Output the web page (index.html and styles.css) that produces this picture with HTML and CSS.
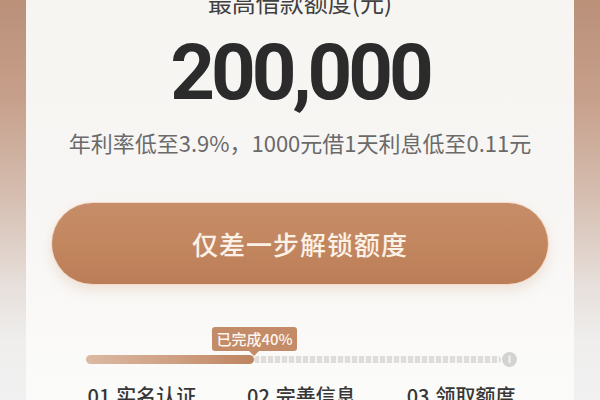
FILE: index.html
```html
<!DOCTYPE html>
<html lang="zh-CN">
<head>
<meta charset="utf-8">
<title>借款额度</title>
<link rel="stylesheet" href="styles.css">
</head>
<body>
<div class="page">
  <main class="card">
    <div class="title">最高借款额度(元)</div>
    <div class="amount">200,000</div>
    <div class="rate">年利率低至3.9%，1000元借1天利息低至0.11元</div>
    <button class="cta">仅差一步解锁额度</button>
    <div class="progress">
      <div class="track">
        <div class="fill" style="width: 40.6%">
          <span class="tip">已完成40%</span>
        </div>
        <div class="rest"></div>
      </div>
      <svg class="end" width="15" height="15" viewBox="0 0 15 15" aria-hidden="true">
        <circle cx="7.5" cy="7.5" r="7.5" fill="#d3d3d3"/>
        <rect x="6.6" y="3.6" width="1.8" height="7.8" rx="0.9" fill="#f4f4f4"/>
      </svg>
    </div>
    <div class="steps">
      <span>01.实名认证</span>
      <span>02.完善信息</span>
      <span>03.领取额度</span>
    </div>
  </main>
</div>
</body>
</html>
```

FILE: styles.css
```css
html, body {
  margin: 0;
  padding: 0;
}
body {
  width: 600px;
  height: 400px;
  overflow: hidden;
  font-family: "Noto Sans CJK SC", "Noto Sans", sans-serif;
  background: linear-gradient(180deg, #ba9079 0%, #c7a08b 25%, #d6bfb2 50%, #e7e0dc 72%, #efeeed 85%, #f1f1f1 100%);
}
.page {
  height: 400px;
  padding: 0 26px;
  box-sizing: border-box;
}
.card {
  height: 400px;
  overflow: hidden;
  background: linear-gradient(180deg, #f7f5f2 0%, #f8f6f4 50%, #fbfbfa 100%);
  display: flex;
  flex-direction: column;
  align-items: center;
}
.card > * {
  flex-shrink: 0;
}
.title {
  margin-top: -10px;
  height: 24px;
  line-height: 24px;
  font-size: 24px;
  color: #404040;
}
.amount {
  margin-top: 19px;
  height: 79px;
  line-height: 79px;
  font-family: Roboto, "Liberation Sans", sans-serif;
  font-weight: 700;
  font-size: 78px;
  letter-spacing: -4px;
  color: #2b2b2b;
}
.rate {
  margin-top: 19px;
  height: 22px;
  line-height: 22px;
  font-size: 22px;
  color: #6a6a6a;
  white-space: nowrap;
}
.cta {
  margin-top: 50px;
  width: 496px;
  height: 81px;
  border: none;
  border-radius: 41px;
  background: linear-gradient(180deg, #c68d68 0%, #c2865f 55%, #bb7d57 100%);
  box-shadow: 0 0 0 1px rgba(246, 214, 190, 0.8), 0 6px 14px rgba(196, 140, 100, 0.22);
  color: #fcf1e7;
  font-family: "Noto Sans CJK SC", sans-serif;
  font-size: 26px;
  font-weight: 500;
  letter-spacing: 1px;
  padding: 0;
}
.progress {
  margin-top: 68px;
  width: 431px;
  display: flex;
  align-items: center;
  gap: 1px;
  margin-left: 2px;
}
.track {
  flex: 1;
  height: 9px;
  display: flex;
}
.fill {
  position: relative;
  height: 9px;
  border-radius: 5px;
  background: linear-gradient(90deg, #dbb9a3 0%, #cfa184 50%, #be8460 100%);
}
.rest {
  flex: 1;
  height: 7px;
  margin-top: 1px;
  border-radius: 4px;
  background:
    repeating-linear-gradient(90deg, rgba(255,255,255,0) 0 5px, rgba(255,255,255,0.7) 5px 7px),
    #dfdcda;
}
.tip {
  position: absolute;
  right: -43px;
  bottom: 13px;
  width: 85px;
  height: 24px;
  line-height: 24px;
  border-radius: 3px;
  background: #c38b67;
  color: #fdf5ee;
  font-size: 15px;
  font-weight: 500;
  text-align: center;
  white-space: nowrap;
}
.tip::after {
  content: "";
  position: absolute;
  left: 50%;
  bottom: -5px;
  margin-left: -5px;
  border-left: 5px solid transparent;
  border-right: 5px solid transparent;
  border-top: 5px solid #c38b67;
}
.end {
  flex: none;
}
.steps {
  margin-top: 18px;
  width: 428px;
  margin-left: 3px;
  display: flex;
  justify-content: space-between;
  font-size: 20px;
  font-weight: 500;
  line-height: 22px;
  color: #363636;
  white-space: nowrap;
}
```
